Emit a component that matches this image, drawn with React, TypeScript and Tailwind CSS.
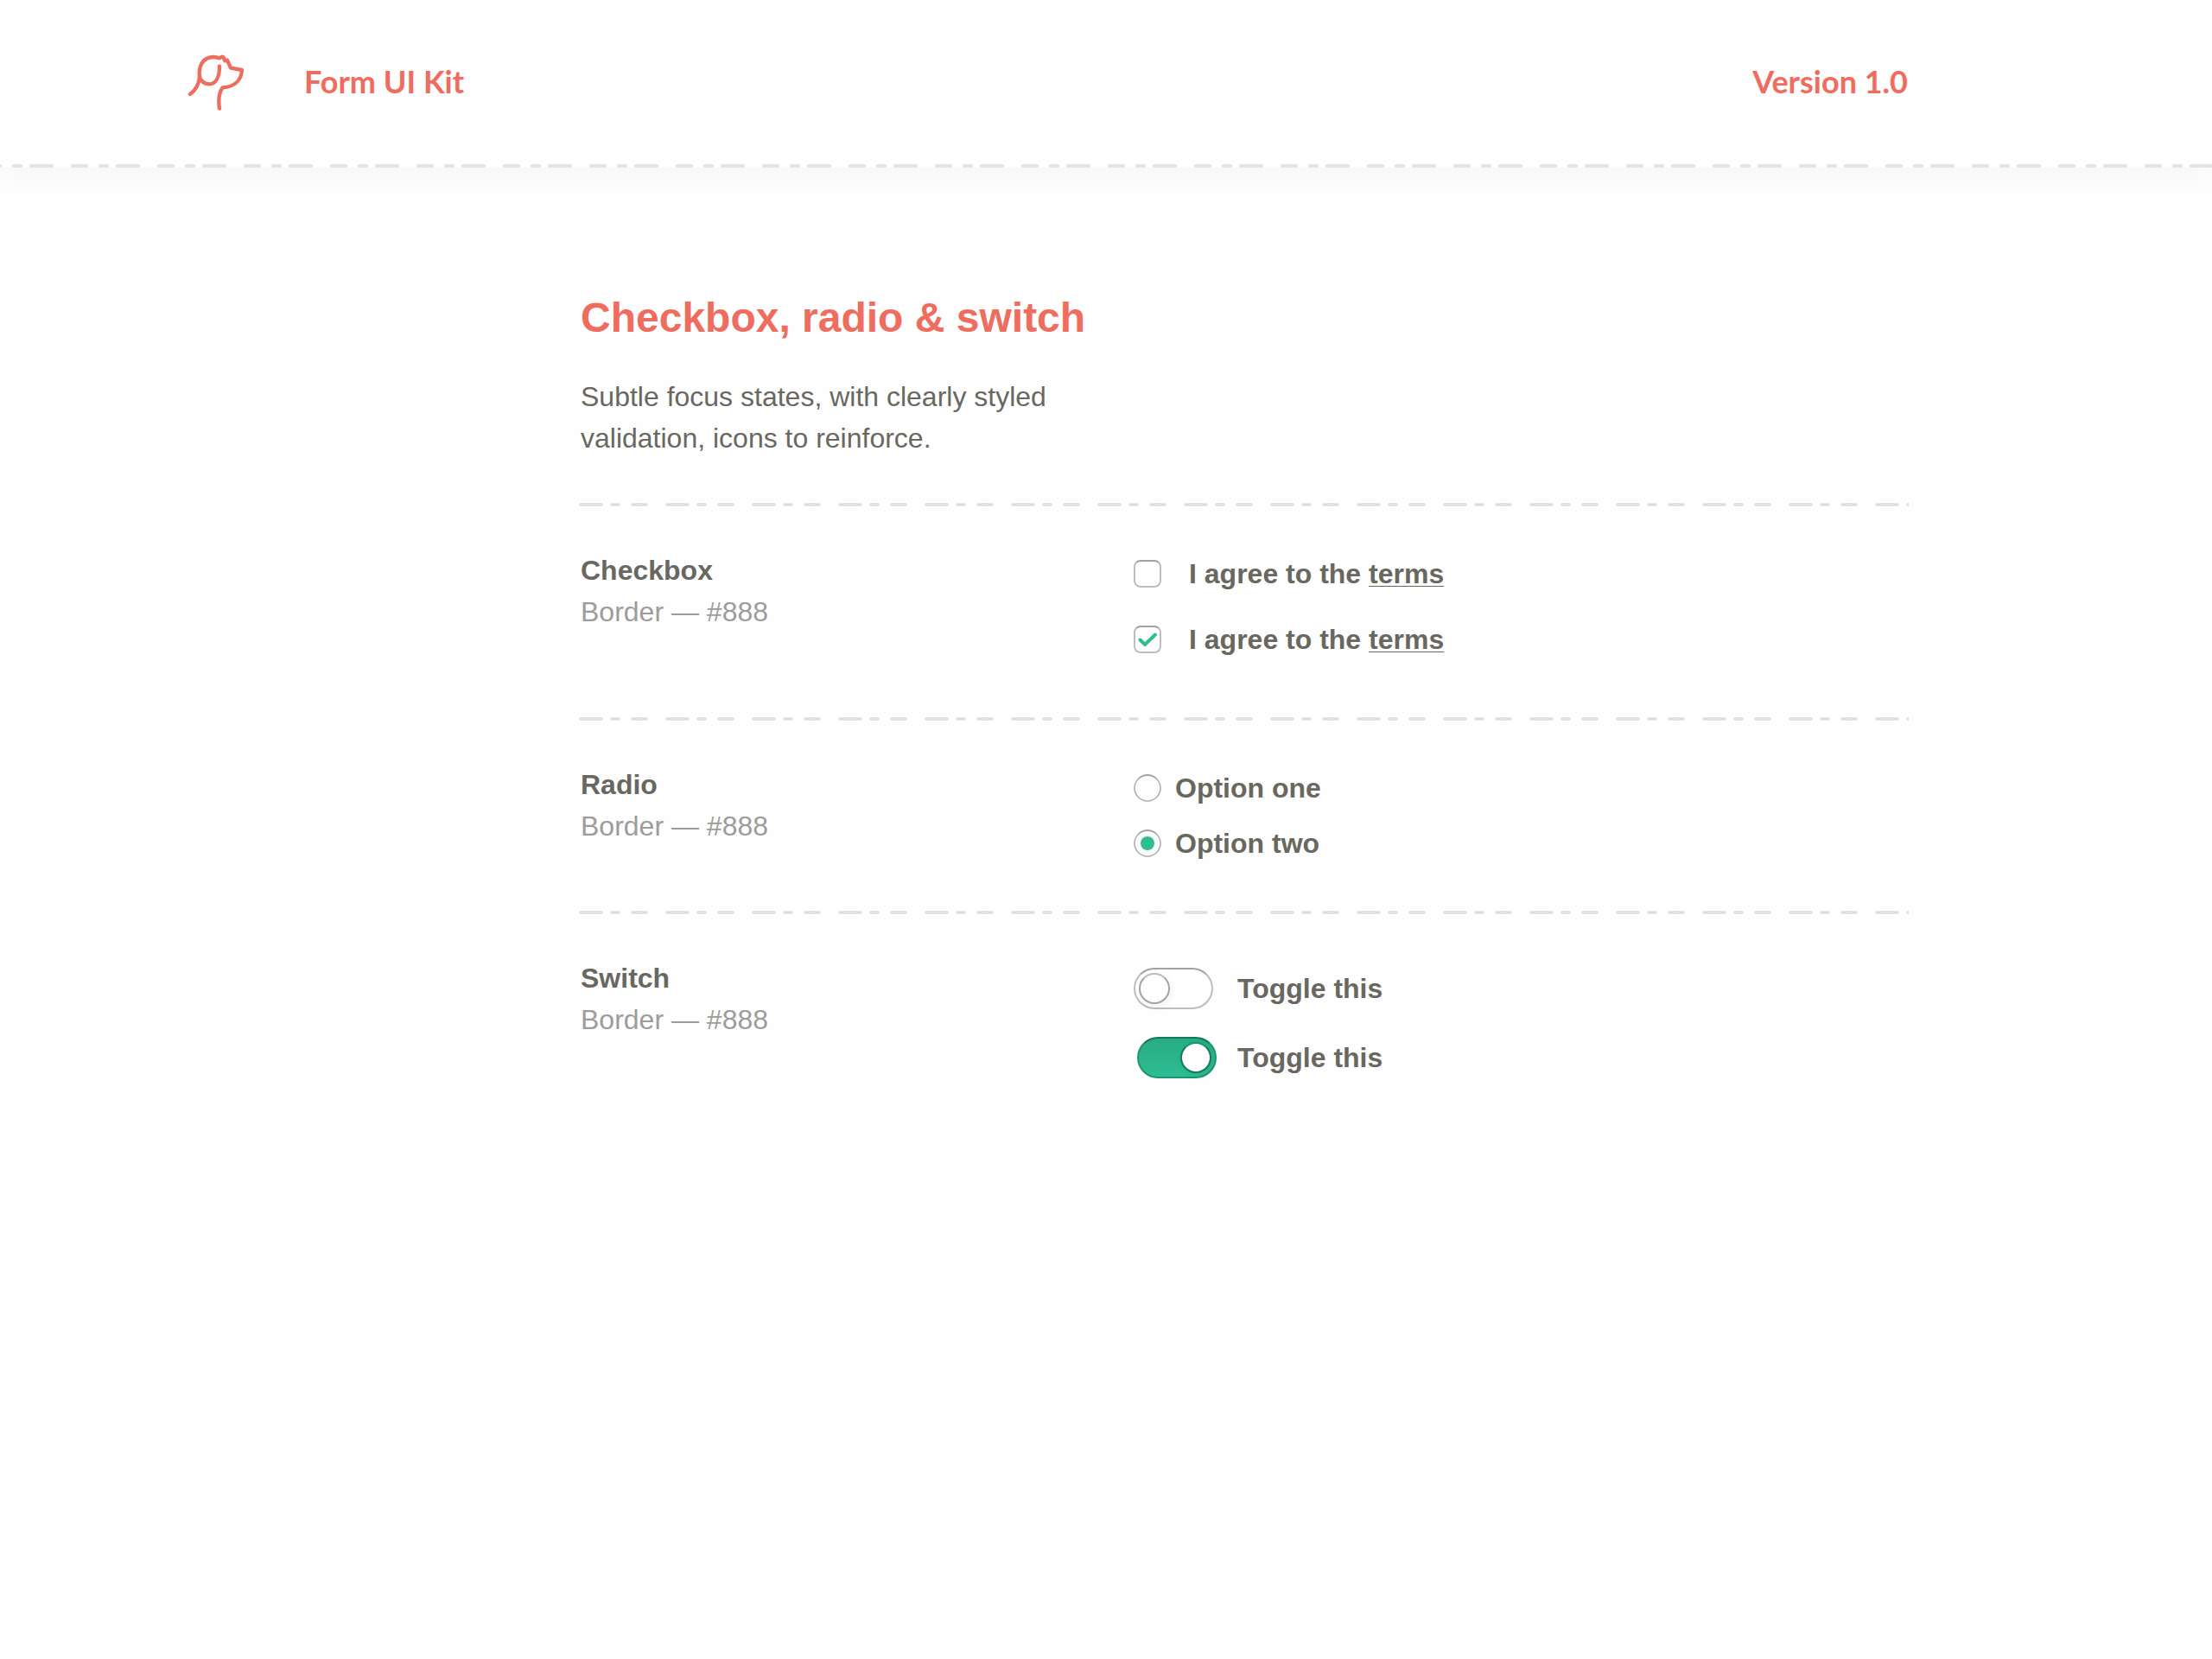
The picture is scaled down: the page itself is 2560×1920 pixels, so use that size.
import React, { useId } from "react";

function HeaderRule() {
  const id = useId();
  return (
    <svg aria-hidden="true" className="block h-1 w-full text-[#e4e4e0]">
      <defs>
        <pattern id={id} width="100" height="4" patternUnits="userSpaceOnUse" fill="currentColor">
          <rect x="-18" width="20" height="6" rx="1.5" />
          <rect x="14" width="12" height="6" rx="1.5" />
          <rect x="34" width="28" height="6" rx="1.5" />
          <rect x="82" width="20" height="6" rx="1.5" />
        </pattern>
      </defs>
      <rect width="100%" height="4" fill={`url(#${id})`} />
    </svg>
  );
}

function Rule() {
  const id = useId();
  return (
    <svg aria-hidden="true" className="block h-1 w-full text-[#e4e3df]">
      <defs>
        <pattern id={id} width="100" height="4" patternUnits="userSpaceOnUse" fill="currentColor">
          <rect x="0" width="28" height="4" rx="2" />
          <rect x="36" width="12" height="4" rx="2" />
          <rect x="60" width="20" height="4" rx="2" />
        </pattern>
      </defs>
      <rect width="100%" height="4" fill={`url(#${id})`} />
    </svg>
  );
}

function DogLogo() {
  return (
    <svg
      viewBox="78 62 204 204"
      className="size-17"
      fill="none"
      stroke="currentColor"
      strokeWidth="13"
      strokeLinecap="round"
      strokeLinejoin="round"
      role="img"
      aria-label="Dog"
    >
      <path d="M90 209C108 196 120 178 123 150C118 106 138 80 172 80C181 80 187 83 193 84L200 79L206 81L211 93L219 91L231 118L270 125C268 160 245 183 203 186C190 205 188 235 192 259" />
      <path d="M192 112C192 150 180 174 156 174C137 174 128 162 123 150" />
    </svg>
  );
}

function Section({ title, children }: { title: string; children: React.ReactNode }) {
  return (
    <section>
      <Rule />
      <div className="flex pt-[50px] pb-[54px] pl-0.5">
        <div className="w-160 shrink-0">
          <h2 className="font-bold">{title}</h2>
          <p className="text-[#9c9c9a]">Border — #888</p>
        </div>
        {children}
      </div>
    </section>
  );
}

function Checkbox({ defaultChecked = false }: { defaultChecked?: boolean }) {
  const id = useId();
  return (
    <div className="flex items-center gap-8">
      <span className="grid size-8">
        <input
          id={id}
          type="checkbox"
          defaultChecked={defaultChecked}
          className="peer col-start-1 row-start-1 size-8 appearance-none rounded-lg border-2 border-[#bdbdbd] border-t-[#a3a3a3] bg-white"
        />
        <svg
          viewBox="0 0 32 32"
          aria-hidden="true"
          className="pointer-events-none invisible col-start-1 row-start-1 size-8 text-[#2ebd93] peer-checked:visible"
          fill="none"
          stroke="currentColor"
          strokeWidth="4"
          strokeLinecap="round"
          strokeLinejoin="round"
        >
          <path d="M7.5 16.5L13 22L25 10.5" />
        </svg>
      </span>
      <label htmlFor={id} className="font-bold">
        I agree to the{" "}
        <a href="#terms" className="underline decoration-1 underline-offset-3">
          terms
        </a>
      </label>
    </div>
  );
}

function Radio({ label, defaultChecked = false }: { label: string; defaultChecked?: boolean }) {
  return (
    <label className="flex items-center gap-4 font-bold">
      <input
        type="radio"
        name="option"
        defaultChecked={defaultChecked}
        className="grid size-8 appearance-none place-items-center rounded-full border-2 border-[#bdbdbd] border-t-[#a3a3a3] bg-white before:size-4 before:rounded-full checked:before:bg-[#2ebd93]"
      />
      {label}
    </label>
  );
}

function Switch({ defaultChecked = false }: { defaultChecked?: boolean }) {
  return (
    <label className="flex items-center font-bold">
      <span className="w-30">
        <input
          type="checkbox"
          role="switch"
          defaultChecked={defaultChecked}
          className="flex h-12 w-23 appearance-none items-center rounded-full border-2 border-[#bdbdbd] border-t-[#a3a3a3] bg-white px-1 before:size-9 before:rounded-full before:border-2 before:border-[#a3a3a3] before:border-t-[#bdbdbd] before:bg-white before:shadow-[2px_4px_8px_rgba(0,0,0,0.05)] checked:ml-1 checked:justify-end checked:border-[#1a9770] checked:border-t-[#137a59] checked:bg-linear-to-b checked:from-[#28ab83] checked:to-[#2fbd93] checked:before:border-[#137a59] checked:before:border-t-[#1a9770]"
        />
      </span>
      Toggle this
    </label>
  );
}

export default function App() {
  return (
    <div className="min-h-screen bg-[#fefefe] font-['Liberation_Sans',Arial,sans-serif] text-[32px] leading-12 text-[#696860]">
      <header className="bg-[#fefefe] shadow-[0_8px_28px_rgba(105,104,80,0.05)]">
        <div className="flex h-[190px] items-center pr-[352px] pb-0.5 pl-[216px] font-['Lato',sans-serif] text-[36px] font-bold text-[#ee6d5e]">
          <DogLogo />
          <span className="ml-17">Form UI Kit</span>
          <span className="ml-auto">Version 1.0</span>
        </div>
        <HeaderRule />
      </header>

      <main className="pt-[138px] pr-[351px] pl-[670px]">
        <h1 className="pl-0.5 text-[48px] leading-[72px] font-bold text-[#ee6d5e]">
          Checkbox, radio &amp; switch
        </h1>
        <p className="mt-[31px] mb-[51px] max-w-[580px] pl-0.5">
          Subtle focus states, with clearly styled validation, icons to reinforce.
        </p>

        <Section title="Checkbox">
          <div className="flex flex-col gap-7 pt-1 pb-3">
            <Checkbox />
            <Checkbox defaultChecked />
          </div>
        </Section>
        <Section title="Radio">
          <div className="flex flex-col gap-4 pt-1">
            <Radio label="Option one" />
            <Radio label="Option two" defaultChecked />
          </div>
        </Section>
        <Section title="Switch">
          <div className="flex flex-col gap-8 pt-3">
            <Switch />
            <Switch defaultChecked />
          </div>
        </Section>
      </main>
    </div>
  );
}
